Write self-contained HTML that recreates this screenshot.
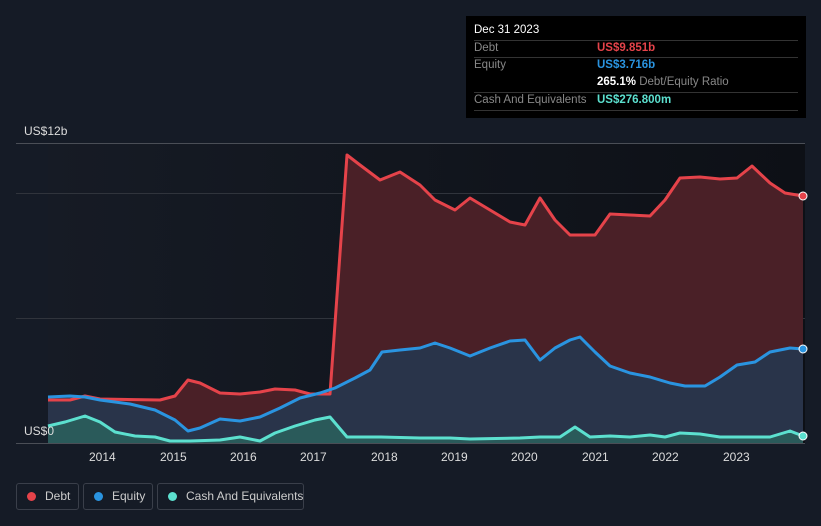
<!DOCTYPE html>
<html><head><style>
body{margin:0;width:821px;height:526px;background:#151b26;font-family:"Liberation Sans",sans-serif;overflow:hidden;position:relative}
.tip{position:absolute;left:466px;top:16px;width:340px;height:102px;background:#000;font-size:11.5px;color:#888}
.tip .r{position:absolute;left:8px;width:324px;border-top:1px solid #333}
.leg{position:absolute;top:483px;height:27px;border:1px solid #3a3f4a;border-radius:3px;color:#ccc;font-size:12px;box-sizing:border-box;line-height:25px;white-space:nowrap}
.leg i{position:absolute;left:10px;top:8px;width:9px;height:9px;border-radius:50%}
.leg span{position:absolute;left:28px}
.ax{position:absolute;color:#ddd;font-size:12px}
</style></head><body>
<svg width="821" height="526" style="position:absolute;left:0;top:0">
<defs><linearGradient id="bg" x1="0" x2="1"><stop offset="0" stop-color="#161b25"/><stop offset="1" stop-color="#0d1016"/></linearGradient></defs>
<rect x="48" y="143" width="757" height="300" fill="url(#bg)"/>
<line x1="16" y1="143.5" x2="805" y2="143.5" stroke="#4a4e56"/>
<line x1="16" y1="193.5" x2="805" y2="193.5" stroke="#30343c"/>
<line x1="16" y1="318.5" x2="805" y2="318.5" stroke="#30343c"/>
<path d="M48,400 L70,400 85,396 100,399 160,400 175,396 188,380 200,383 220,393 240,394 260,392 275,389 295,390 310,394 330,394 347,155 360,165 380,180 400,172 420,185 435,200 455,210 470,198 490,210 510,222 525,225 540,198 555,220 570,235 595,235 610,214 630,215 650,216 665,200 680,178 700,177 720,179 737,178 752,166 770,183 785,193 803,196 L803,443 L48,443Z" fill="#4a2027"/>
<path d="M48,397 L70,396 85,397 100,400 130,404 155,410 175,420 188,431 200,428 220,419 240,421 260,417 280,408 300,398 320,393 335,388 355,378 370,370 382,352 400,350 420,348 435,343 450,348 470,356 490,348 510,341 525,340 540,360 555,348 570,340 580,337 595,352 610,366 630,373 650,377 670,383 685,386 705,386 720,377 737,365 755,362 770,352 790,348 803,349 L803,443 L48,443Z" fill="#29344a"/>
<path d="M48,426 L65,422 85,416 100,422 115,432 135,436 155,437 170,441 190,441 220,440 240,437 260,441 275,433 295,426 315,420 330,417 347,437 380,437 420,438 450,438 470,439 520,438 540,437 560,437 575,427 590,437 610,436 630,437 650,435 665,437 680,433 700,434 720,437 740,437 770,437 790,431 803,436 L803,443 L48,443Z" fill="#2a5a5a"/>
<path d="M48,400 L70,400 85,396 100,399 160,400 175,396 188,380 200,383 220,393 240,394 260,392 275,389 295,390 310,394 330,394 347,155 360,165 380,180 400,172 420,185 435,200 455,210 470,198 490,210 510,222 525,225 540,198 555,220 570,235 595,235 610,214 630,215 650,216 665,200 680,178 700,177 720,179 737,178 752,166 770,183 785,193 803,196" fill="none" stroke="#e5434a" stroke-width="3" stroke-linejoin="round"/>
<path d="M48,397 L70,396 85,397 100,400 130,404 155,410 175,420 188,431 200,428 220,419 240,421 260,417 280,408 300,398 320,393 335,388 355,378 370,370 382,352 400,350 420,348 435,343 450,348 470,356 490,348 510,341 525,340 540,360 555,348 570,340 580,337 595,352 610,366 630,373 650,377 670,383 685,386 705,386 720,377 737,365 755,362 770,352 790,348 803,349" fill="none" stroke="#2a94e0" stroke-width="3" stroke-linejoin="round"/>
<path d="M48,426 L65,422 85,416 100,422 115,432 135,436 155,437 170,441 190,441 220,440 240,437 260,441 275,433 295,426 315,420 330,417 347,437 380,437 420,438 450,438 470,439 520,438 540,437 560,437 575,427 590,437 610,436 630,437 650,435 665,437 680,433 700,434 720,437 740,437 770,437 790,431 803,436" fill="none" stroke="#5ce0cf" stroke-width="3" stroke-linejoin="round"/>
<line x1="16" y1="443.5" x2="805" y2="443.5" stroke="#4a4e56"/>
<circle cx="803" cy="196" r="4" fill="#e5434a" stroke="#fff"/>
<circle cx="803" cy="349" r="4" fill="#2a94e0" stroke="#fff"/>
<circle cx="803" cy="436" r="4" fill="#5ce0cf" stroke="#fff"/>
</svg>
<div class="ax" style="left:24px;top:124px">US$12b</div>
<div class="ax" style="left:24px;top:424px">US$0</div>
<div class="ax" style="left:89px;top:450px">2014</div>
<div class="ax" style="left:160px;top:450px">2015</div>
<div class="ax" style="left:230px;top:450px">2016</div>
<div class="ax" style="left:300px;top:450px">2017</div>
<div class="ax" style="left:371px;top:450px">2018</div>
<div class="ax" style="left:441px;top:450px">2019</div>
<div class="ax" style="left:511px;top:450px">2020</div>
<div class="ax" style="left:582px;top:450px">2021</div>
<div class="ax" style="left:652px;top:450px">2022</div>
<div class="ax" style="left:723px;top:450px">2023</div>
<div class="tip">
<div style="position:absolute;left:8px;top:8px;color:#fff">Dec 31 2023</div>
<div class="r" style="top:24px"></div>
<div style="position:absolute;left:8px;top:26px">Debt</div><div style="position:absolute;left:131px;top:26px;color:#e5434a;font-weight:bold">US$9.851b</div>
<div class="r" style="top:41px"></div>
<div style="position:absolute;left:8px;top:43px">Equity</div><div style="position:absolute;left:131px;top:43px;color:#2a94e0;font-weight:bold">US$3.716b</div>
<div style="position:absolute;left:131px;top:60px"><b style="color:#fff">265.1%</b> Debt/Equity Ratio</div>
<div class="r" style="top:76px"></div>
<div style="position:absolute;left:8px;top:78px">Cash And Equivalents</div><div style="position:absolute;left:131px;top:78px;color:#5ce0cf;font-weight:bold">US$276.800m</div>
<div class="r" style="top:94px"></div>
</div>
<div class="leg" style="left:16px;width:63px"><i style="background:#e5434a"></i><span>Debt</span></div>
<div class="leg" style="left:83px;width:70px"><i style="background:#2a94e0"></i><span>Equity</span></div>
<div class="leg" style="left:157px;width:147px"><i style="background:#5ce0cf"></i><span>Cash And Equivalents</span></div>
</body></html>
